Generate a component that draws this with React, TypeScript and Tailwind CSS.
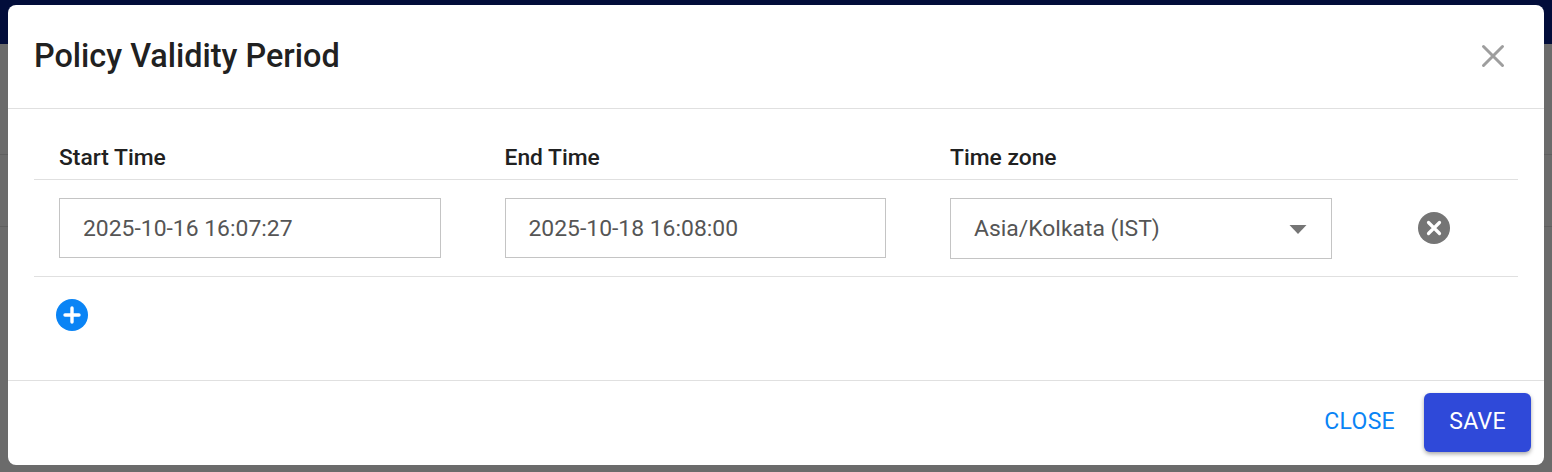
const columns = [
  { label: 'Start Time', value: '2025-10-16 16:07:27', width: 'w-[382px]' },
  { label: 'End Time', value: '2025-10-18 16:08:00', width: 'w-[381px]' },
];

const App = () => {
  return (
    <div className="relative h-[472px] w-[1552px] overflow-hidden bg-[#6b6b6b] font-['Roboto',sans-serif]">
      {/* page behind the overlay */}
      <div className="h-[44px] bg-[#020d3a]" />
      <div className="h-[111px] border-b border-[#5f5f5f]" />
      <div className="h-[72px] border-b border-[#5f5f5f]" />

      {/* dialog */}
      <div className="absolute left-[8px] top-[5px] flex h-[460px] w-[1536px] flex-col rounded-[8px] bg-white">
        <div className="flex h-[104px] shrink-0 items-center justify-between border-b border-[#e0e0e0] pl-[26px] pr-[38px]">
          <h2 className="mb-[2px] text-[32.4px] leading-[40px] font-medium text-[#212121]">Policy Validity Period</h2>
          <svg width="26" height="26" viewBox="0 0 26 26" className="mb-[2px]">
            <path d="M3.5 3.5 L22.5 22.5 M22.5 3.5 L3.5 22.5" stroke="#9e9e9e" strokeWidth="3" strokeLinecap="round" />
          </svg>
        </div>

        <div className="flex-1 px-[26px]">
          <div className="flex h-[71px] items-end border-b border-[#e0e0e0] pb-[7px] pl-[25px]">
            {columns.map((c) => (
              <div key={c.label} className="w-[445.5px] text-[22.8px] leading-[28px] font-medium text-[#212121]">{c.label}</div>
            ))}
            <div className="text-[22.8px] leading-[28px] font-medium text-[#212121]">Time zone</div>
          </div>

          <div className="flex h-[97px] items-center border-b border-[#e0e0e0] pl-[25px]">
            {columns.map((c) => (
              <div key={c.label} className="w-[445.5px]">
                <div className={`flex h-[60px] ${c.width} items-center border border-[#c4c4c4] pl-[23px] pt-[2px] text-[22.9px] text-[#555555]`}>
                  {c.value}
                </div>
              </div>
            ))}
            <div className="flex h-[61px] w-[382px] items-center justify-between border border-[#c4c4c4] pl-[23px] pr-[24px] pt-[2px] text-[22.9px] text-[#555555]">
              <span>Asia/Kolkata (IST)</span>
              <svg width="18" height="9" viewBox="0 0 18 9">
                <path d="M0.5 0 L17.5 0 L9 9 Z" fill="#757575" />
              </svg>
            </div>
            <svg width="34" height="34" viewBox="0 0 34 34" className="ml-[85px]">
              <circle cx="17" cy="17" r="16" fill="#757575" />
              <path d="M11.5 11.5 L22.5 22.5 M22.5 11.5 L11.5 22.5" stroke="#ffffff" strokeWidth="3.2" strokeLinecap="round" />
            </svg>
          </div>

          <div className="pl-[21px] pt-[21px]">
            <svg width="34" height="34" viewBox="0 0 34 34">
              <circle cx="17" cy="17" r="16" fill="#0a84f5" />
              <path d="M17 10 V24 M10 17 H24" stroke="#ffffff" strokeWidth="3.4" strokeLinecap="round" />
            </svg>
          </div>
        </div>

        <div className="flex h-[85px] shrink-0 items-center justify-end gap-[29px] border-t border-[#e0e0e0] pb-[2px] pr-[13px]">
          <button className="text-[23px] tracking-[0.3px] text-[#0a84f5]">CLOSE</button>
          <button className="h-[59px] w-[107px] rounded-[6px] bg-[#2f49d9] text-[23px] tracking-[0.3px] text-white shadow-[0_2px_4px_rgba(0,0,0,0.35)]">
            SAVE
          </button>
        </div>
      </div>
    </div>
  );
};

export default App;
